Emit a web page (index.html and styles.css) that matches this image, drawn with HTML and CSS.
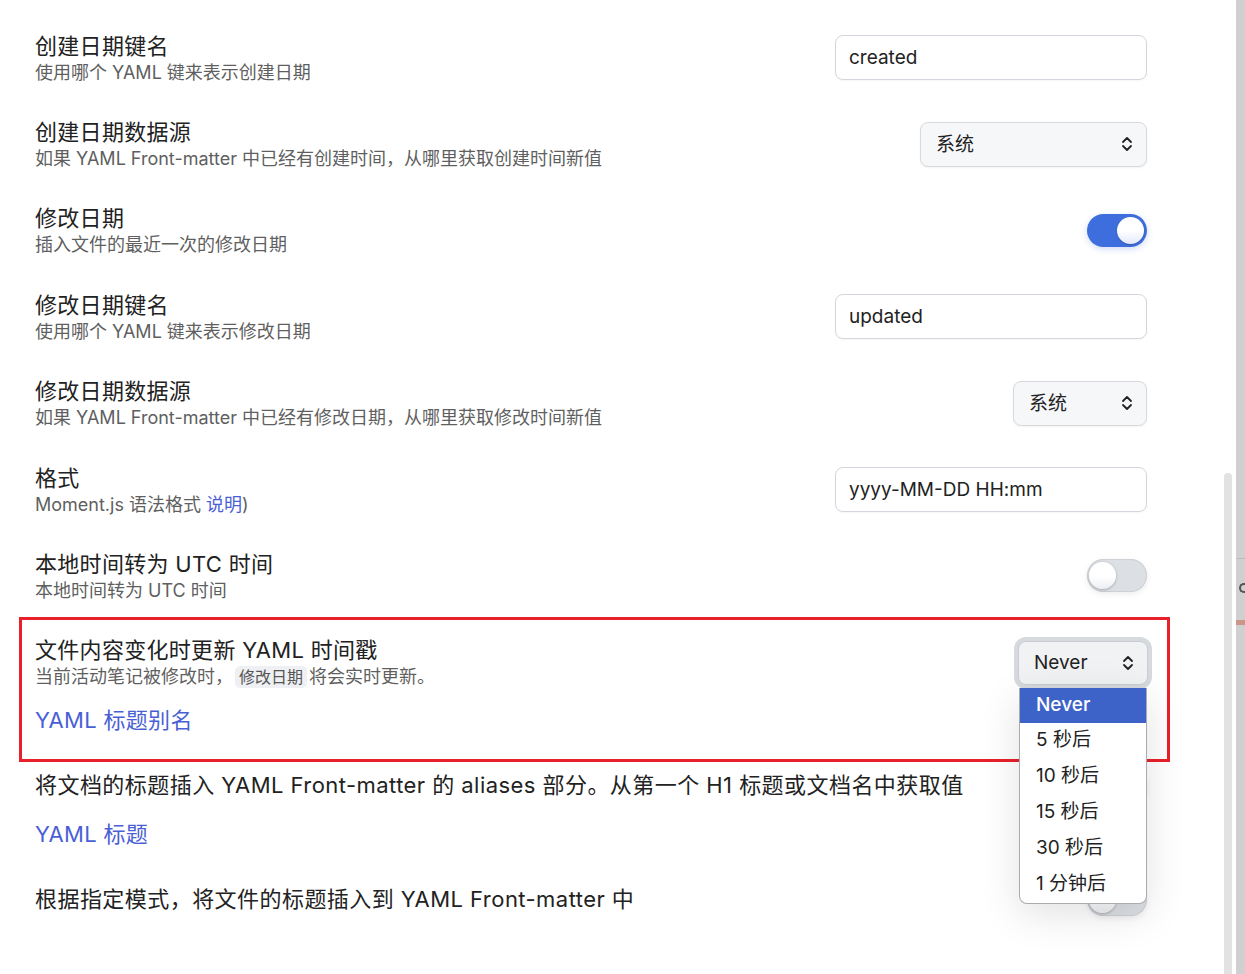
FILE: index.html
```html
<!DOCTYPE html>
<html lang="zh-CN">

<head>
  <meta charset="UTF-8">
  <title>设置 - YAML 时间戳</title>
  <link rel="stylesheet" href="styles.css">
</head>

<body>
  <div class="app">
    <div class="settings-pane">
      <div class="settings">

        <div class="setting">
          <div class="setting-info">
            <div class="setting-name">创建日期键名</div>
            <div class="setting-desc">使用哪个 YAML 键来表示创建日期</div>
          </div>
          <input class="text-input" type="text" value="created">
        </div>

        <div class="setting">
          <div class="setting-info">
            <div class="setting-name">创建日期数据源</div>
            <div class="setting-desc">如果 YAML Front-matter 中已经有创建时间，从哪里获取创建时间新值</div>
          </div>
          <div class="select select-wide">
            <span>系统</span>
            <svg class="chevron" viewBox="0 0 12 16" width="12" height="16"><path d="M2 6l4-4 4 4M2 10l4 4 4-4" /></svg>
          </div>
        </div>

        <div class="setting">
          <div class="setting-info">
            <div class="setting-name">修改日期</div>
            <div class="setting-desc">插入文件的最近一次的修改日期</div>
          </div>
          <div class="toggle on"><div class="knob"></div></div>
        </div>

        <div class="setting">
          <div class="setting-info">
            <div class="setting-name">修改日期键名</div>
            <div class="setting-desc">使用哪个 YAML 键来表示修改日期</div>
          </div>
          <input class="text-input" type="text" value="updated">
        </div>

        <div class="setting">
          <div class="setting-info">
            <div class="setting-name">修改日期数据源</div>
            <div class="setting-desc">如果 YAML Front-matter 中已经有修改日期，从哪里获取修改时间新值</div>
          </div>
          <div class="select select-small">
            <span>系统</span>
            <svg class="chevron" viewBox="0 0 12 16" width="12" height="16"><path d="M2 6l4-4 4 4M2 10l4 4 4-4" /></svg>
          </div>
        </div>

        <div class="setting">
          <div class="setting-info">
            <div class="setting-name">格式</div>
            <div class="setting-desc">Moment.js 语法格式 <a href="#">说明</a>)</div>
          </div>
          <input class="text-input" type="text" value="yyyy-MM-DD HH:mm">
        </div>

        <div class="setting">
          <div class="setting-info">
            <div class="setting-name">本地时间转为 UTC 时间</div>
            <div class="setting-desc">本地时间转为 UTC 时间</div>
          </div>
          <div class="toggle"><div class="knob"></div></div>
        </div>

        <!-- highlighted block -->
        <div class="highlight">
          <div class="setting">
            <div class="setting-info">
              <div class="setting-name">文件内容变化时更新 YAML 时间戳</div>
              <div class="setting-desc">当前活动笔记被修改时，<code>修改日期</code>将会实时更新。</div>
            </div>
            <div class="select-wrap">
              <div class="select select-small focused">
                <span>Never</span>
                <svg class="chevron" viewBox="0 0 12 16" width="12" height="16"><path d="M2 6l4-4 4 4M2 10l4 4 4-4" /></svg>
              </div>
              <div class="options">
                <div class="option selected">Never</div>
                <div class="option">5 秒后</div>
                <div class="option">10 秒后</div>
                <div class="option">15 秒后</div>
                <div class="option">30 秒后</div>
                <div class="option">1 分钟后</div>
              </div>
            </div>
          </div>
          <div class="section-heading">YAML 标题别名</div>
        </div>

        <div class="setting">
          <div class="setting-info">
            <div class="setting-name wide">将文档的标题插入 YAML Front-matter 的 aliases 部分。从第一个 H1 标题或文档名中获取值</div>
          </div>
          <div class="toggle"><div class="knob"></div></div>
        </div>

        <div class="section-heading">YAML 标题</div>

        <div class="setting">
          <div class="setting-info">
            <div class="setting-name wide">根据指定模式，将文件的标题插入到 YAML Front-matter 中</div>
          </div>
          <div class="toggle"><div class="knob"></div></div>
        </div>

      </div>
    </div>

    <div class="scroll-track"><div class="scroll-thumb"></div></div>

    <div class="side-strip">
      <div class="strip-line"></div>
      <div class="strip-icon"></div>
      <div class="strip-accent"></div>
    </div>
  </div>
</body>

</html>
```

FILE: styles.css
```css
* {
  margin: 0;
  padding: 0;
  box-sizing: border-box;
}

body {
  font-family: Inter, "Noto Sans CJK SC", sans-serif;
  color: #222;
  background-color: white;
  overflow: hidden;
}

.app {
  display: flex;
  height: 974px;
}

.settings-pane {
  flex: 1;
  padding: 14.5px 0 0 35px;
}

.settings {
  width: 1112px;
}

.setting {
  display: flex;
  justify-content: space-between;
  align-items: center;
  padding: 17.2px 0;
}

.setting-name {
  font-size: 22px;
  line-height: 29px;
  letter-spacing: 0.3px;
  color: #222;
}

.setting-name.wide {
  letter-spacing: 0.45px;
}

.setting-desc {
  font-size: 18px;
  line-height: 23px;
  color: #5f5f5f;
}

.setting-desc a {
  color: #4a5fd6;
  text-decoration: none;
}

.setting-desc code {
  font-family: inherit;
  font-size: 16px;
  background-color: #eef0f3;
  color: #555;
  border-radius: 5px;
  padding: 1px 4px;
  margin: 0 2px;
}

/* controls */
.text-input {
  width: 312px;
  height: 45px;
  border: 1px solid #d3d7dd;
  border-radius: 8px;
  padding: 0 13px;
  font-family: inherit;
  font-size: 19px;
  color: #222;
  background-color: white;
  box-shadow: 0 1px 2px rgba(0, 0, 0, 0.04);
  outline: none;
}

.select {
  display: flex;
  align-items: center;
  justify-content: space-between;
  height: 45px;
  padding: 0 13px 3px 15px;
  border: 1px solid #d7d9dd;
  border-radius: 8px;
  background-color: #f6f7f9;
  font-size: 19px;
  color: #222;
  box-shadow: 0 1px 2px rgba(0, 0, 0, 0.05);
}

.select .chevron {
  margin-top: 3px;
}

.select-wide {
  width: 227px;
}

.select-small {
  width: 134px;
}

.select.focused {
  width: 130px;
  height: 44px;
  padding-bottom: 1px;
  background-color: #f1f2f4;
  box-shadow: 0 0 0 4px #d6dadf;
  border-color: #c9cdd3;
}

.select.focused .chevron {
  margin-top: 1px;
}

.chevron {
  fill: none;
  stroke: #222;
  stroke-width: 1.8;
  stroke-linecap: round;
  stroke-linejoin: round;
}

.toggle {
  position: relative;
  width: 60px;
  height: 33px;
  border-radius: 17px;
  background-color: #dcdfe3;
  box-shadow: inset 0 0 0 1px #cdd1d6, 0 2px 6px rgba(0, 0, 0, 0.08);
}

.toggle .knob {
  position: absolute;
  top: 3px;
  left: 2px;
  width: 27px;
  height: 27px;
  border-radius: 50%;
  background: linear-gradient(#ffffff 55%, #eceef2);
  box-shadow: 0 1px 3px rgba(0, 0, 0, 0.25);
}

.toggle.on {
  background-color: #3e6ddd;
  box-shadow: 0 2px 6px rgba(62, 109, 221, 0.25);
}

.toggle.on .knob {
  left: 30px;
  background: linear-gradient(#ffffff 50%, #e4e9fa);
  box-shadow: 0 1px 2px rgba(0, 0, 0, 0.2);
}

/* dropdown menu of the open select */
.select-wrap {
  position: relative;
  margin-right: -1px;
}

.options {
  position: absolute;
  top: 47px;
  left: 1px;
  width: 128px;
  background-color: white;
  border: 1px solid #a9abae;
  border-top: none;
  border-radius: 0 0 8px 8px;
  box-shadow: 0 10px 40px rgba(0, 0, 0, 0.12);
  overflow: hidden;
  z-index: 2;
}

.option {
  height: 36px;
  line-height: 33px;
  padding-left: 16px;
  font-size: 19px;
  color: #222;
}

.option.selected {
  height: 35px;
  background-color: #3d63c9;
  color: white;
  font-weight: 500;
}

.section-heading {
  font-size: 22px;
  line-height: 30px;
  letter-spacing: 0.3px;
  color: #4a5fd6;
  margin: 0 0 16.3px;
}

.highlight {
  position: relative;
}

.highlight .section-heading {
  margin: -1.5px 0 17.1px;
}

.highlight::after {
  content: "";
  position: absolute;
  top: -2.5px;
  left: -16px;
  right: -23px;
  bottom: -26.8px;
  border: 3px solid #e8202a;
  pointer-events: none;
}

/* fake scrollbar and neighbour panel */
.scroll-track {
  width: 8px;
  margin-right: 4px;
  padding-top: 473px;
}

.scroll-thumb {
  height: 100%;
  background-color: #e2e2e2;
  border-radius: 4px 4px 0 0;
}

.side-strip {
  width: 9px;
  background-color: #d0d0d0;
  padding-top: 558px;
}

.strip-line {
  height: 1px;
  background-color: #bcbcbc;
}

.strip-icon {
  width: 6px;
  height: 10px;
  margin: 24px 0 0 3px;
  border: 2px solid #555;
  border-right: none;
  border-radius: 5px 0 0 5px;
}

.strip-accent {
  height: 5px;
  margin-top: 27px;
  background-color: #c9968a;
}
```
